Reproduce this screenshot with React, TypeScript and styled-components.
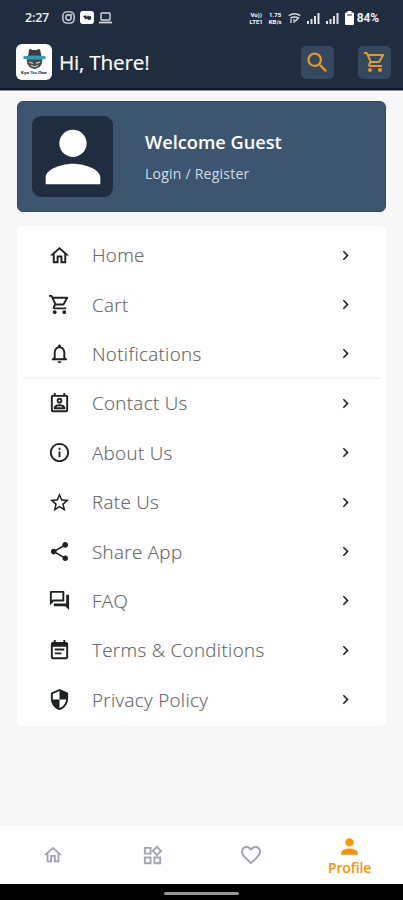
import React from 'react';
import styled, { createGlobalStyle } from 'styled-components';
import {
  MdChevronRight, MdEventNote, MdFavoriteBorder, MdInfoOutline, MdNotificationsNone, MdOutlineHome,
  MdOutlinePermContactCalendar, MdOutlineQuestionAnswer, MdOutlineSecurity, MdOutlineShoppingCart,
  MdOutlineWidgets, MdPerson, MdSearch, MdShare, MdStarBorder,
} from 'react-icons/md';

const GlobalStyle = createGlobalStyle`
  * { box-sizing: border-box; }
  body { margin: 0; background: #f7f7f8; font-family: 'Open Sans', 'Noto Sans', sans-serif; }
  svg { display: block; flex: none; }
`;

const Screen = styled.div`
  width: 403px;
  height: 900px;
  display: flex;
  flex-direction: column;
  overflow: hidden;
  background: #f7f7f8;
`;

const Header = styled.header`
  height: 90px;
  background: #1f2d3e;
  border-bottom: 2px solid #11142d;
  box-shadow: 0 1px 0 #85899a, 0 2px 1px #fff;
`;

const StatusBar = styled.div`
  height: 35px;
  padding: 0 24px 0 25px;
  display: flex;
  align-items: center;
  justify-content: space-between;
  color: #edf1f5;
  font: 700 12px Roboto, sans-serif;
`;

const StatusGroup = styled.div<{ $gap: number }>`
  display: flex;
  align-items: center;
  gap: ${({ $gap }) => $gap}px;
`;

const Clock = styled.span`
  width: 32px;
  font: 600 12.5px 'Open Sans', sans-serif;
  letter-spacing: -0.2px;
`;

const TinyStack = styled.span`
  display: grid;
  justify-items: center;
  font: 800 6px/7px Roboto, sans-serif;
`;

const Percent = styled.span`
  margin-left: -3px;
  letter-spacing: -0.1px;
`;

const TitleBar = styled.div`
  height: 54px;
  padding: 0 12px 0 16px;
  display: flex;
  align-items: center;
`;

const Title = styled.h1`
  flex: 1;
  margin: 0 0 0 7px;
  color: #fff;
  font-size: 20.8px;
  line-height: 28px;
  font-weight: 500;
  letter-spacing: -0.25px;
  -webkit-text-stroke: 0.15px #fff;
`;

const HeaderButton = styled.button`
  width: 33px;
  height: 33px;
  margin-left: 24px;
  padding: 0;
  display: grid;
  place-items: center;
  border: 0;
  border-radius: 5px;
  background: #34495f;
  color: #e9991f;
`;

const Main = styled.main`
  flex: 1;
  padding: 11px 17px 0;
`;

const WelcomeCard = styled.section`
  height: 111px;
  padding: 14px;
  display: flex;
  gap: 32px;
  border: 1px solid #294d68;
  border-radius: 6px;
  background: #3c5670;
`;

const Avatar = styled.div`
  width: 81px;
  height: 81px;
  display: grid;
  place-items: center;
  border-radius: 9px;
  background: #1f2d3e;
`;

const Greeting = styled.div`
  padding-top: 12px;
  color: #fff;
`;

const GreetingTitle = styled.h2`
  margin: 0;
  font-size: 18.2px;
  line-height: 28px;
  font-weight: 600;
`;

const LoginLink = styled.div`
  margin-top: 7px;
  color: #d3dbe5;
  font-size: 14px;
  line-height: 22px;
  letter-spacing: 0.23px;
`;

const Menu = styled.nav`
  height: 500px;
  margin-top: 14px;
  padding: 4.5px 6px 0;
  border-radius: 6px;
  background: #fff;
`;

const MenuRow = styled.div<{ $divided?: boolean }>`
  height: 49.4px;
  padding: 0 25px;
  display: flex;
  align-items: center;
  color: #202124;
  box-shadow: ${({ $divided }) => ($divided ? 'inset 0 -1.5px #f0f0f1' : 'none')};
`;

const MenuLabel = styled.span`
  margin-left: 21px;
  margin-right: auto;
  color: #5c5c5c;
  font-size: 18.8px;
  line-height: 26px;
  font-weight: 300;
  letter-spacing: 0.33px;
  white-space: nowrap;
  -webkit-text-stroke: 0.15px #777;
`;

const Tabs = styled.nav`
  height: 58px;
  padding: 0 4px;
  display: grid;
  grid-template-columns: repeat(4, 1fr);
  background: #fff;
`;

const Tab = styled.div<{ $active?: boolean }>`
  padding-top: ${({ $active }) => ($active ? 1 : 0)}px;
  display: flex;
  flex-direction: column;
  align-items: center;
  justify-content: center;
  color: ${({ $active }) => ($active ? '#fb9209' : '#a0a3b9')};
`;

const TabText = styled.span`
  font-size: 14px;
  line-height: 18px;
  font-weight: 600;
  letter-spacing: -0.1px;
`;

const SystemBar = styled.div`
  height: 16px;
  display: grid;
  place-items: center;
  background: #000;
`;

const Handle = styled.div`
  width: 75px;
  height: 3px;
  margin-top: 2px;
  border-radius: 2px;
  background: #969696;
`;

const Logo = () => (
  <svg width="36" height="36" viewBox="0 0 36 36">
    <rect width="36" height="36" rx="6" fill="#fff" />
    <ellipse cx="18.5" cy="16.5" rx="7.8" ry="8.5" fill="#484a4c" />
    <path d="M12 13 13 6q1-2 3 0h5q2-2 3.2 0l1.3 7z" fill="#3b3d40" />
    <path d="M7.5 12.3q11-1.4 22 0v2.6q-11 1-22 0z" fill="#3498b9" />
    <path d="m13 18 4 1.4M24 18l-4 1.4M15 21.5q3.5 2 7 0" stroke="#c9cdd0" strokeWidth="1.2" fill="none" />
    <g fontFamily="Open Sans, sans-serif" fontSize="4" fontWeight="800">
      <text x="5" y="29.6" fill="#333" textLength="8">Kya</text>
      <text x="14" y="29.6" fill="#1689a0" textLength="7">Tha</text>
      <text x="22" y="29.6" fill="#333" textLength="9">Chor</text>
    </g>
  </svg>
);

const Instagram = () => (
  <svg width="13" height="13" viewBox="0 0 13 13" fill="none" stroke="#d3d9de" strokeWidth="1.4">
    <rect x=".9" y=".9" width="11.2" height="11.2" rx="4" /><circle cx="6.5" cy="6.5" r="2.7" /><circle cx="9.5" cy="3.5" r=".35" />
  </svg>
);

const AppBadge = () => (
  <svg width="14" height="13" viewBox="0 0 14 13">
    <rect width="14" height="13" rx="3" fill="#fff" />
    <path d="m3 5 2.5-.7L7 6l1-2 1 1.5 2-.5v3.5L8.5 9 7 7.4 5.6 8.5z" fill="#1f2d3e" />
  </svg>
);

const Laptop = () => (
  <svg width="13" height="12" viewBox="0 0 13 12" fill="none" stroke="#d3d9de" strokeWidth="1.4">
    <rect x="2" y="1" width="9" height="7" rx=".7" /><path d="M0 10.5h13" strokeWidth="1.8" />
  </svg>
);

const Wifi = () => (
  <svg width="13" height="12" viewBox="0 0 13 12" fill="none" stroke="#d3d9de" strokeWidth="1.5">
    <path d="M.7 3.7Q6.5 0 12.3 3.7M2.5 6Q6.5 3.8 10.5 6L7 9.5" /><path d="M3 7v4m3-4v4" strokeWidth="1.3" />
  </svg>
);

const Signal = () => (
  <svg width="13" height="12" viewBox="0 0 13 12" fill="#dce1e6">
    <rect y="9" width="2" height="3" />
    <rect x="3.5" y="7" width="2" height="5" />
    <rect x="7" y="4" width="2" height="8" />
    <rect x="10.5" y="1" width="2" height="11" />
  </svg>
);

const Battery = () => (
  <svg width="9" height="14" viewBox="0 0 9 14" fill="#fff">
    <rect x="2.5" width="4" height="3" /><rect y="1.5" width="9" height="12.5" rx="1.2" /><path d="M2 3.5h5v1H2z" fill="#1f2d3e" />
  </svg>
);

const rows = [
  { label: 'Home', Icon: MdOutlineHome },
  { label: 'Cart', Icon: MdOutlineShoppingCart },
  { label: 'Notifications', Icon: MdNotificationsNone, divided: true },
  { label: 'Contact Us', Icon: MdOutlinePermContactCalendar },
  { label: 'About Us', Icon: MdInfoOutline },
  { label: 'Rate Us', Icon: MdStarBorder },
  { label: 'Share App', Icon: MdShare },
  { label: 'FAQ', Icon: MdOutlineQuestionAnswer },
  { label: 'Terms & Conditions', Icon: MdEventNote },
  { label: 'Privacy Policy', Icon: MdOutlineSecurity },
];

export default function App() {
  return (
    <Screen>
      <GlobalStyle />
      <Header>
        <StatusBar>
          <StatusGroup $gap={5}><Clock>2:27</Clock><Instagram /><AppBadge /><Laptop /></StatusGroup>
          <StatusGroup $gap={6}>
            <TinyStack><span>Vo))</span><span>LTE1</span></TinyStack>
            <TinyStack><span>1.75</span><span>KB/s</span></TinyStack>
            <Wifi /><Signal /><Signal /><Battery /><Percent>84%</Percent>
          </StatusGroup>
        </StatusBar>
        <TitleBar>
          <Logo />
          <Title>Hi, There!</Title>
          <HeaderButton aria-label="Search"><MdSearch size={27} /></HeaderButton>
          <HeaderButton aria-label="Cart"><MdOutlineShoppingCart size={24} /></HeaderButton>
        </TitleBar>
      </Header>
      <Main>
        <WelcomeCard>
          <Avatar><MdPerson size={82} color="#fff" /></Avatar>
          <Greeting>
            <GreetingTitle>Welcome Guest</GreetingTitle>
            <LoginLink>Login / Register</LoginLink>
          </Greeting>
        </WelcomeCard>
        <Menu>
          {rows.map(({ label, Icon, divided }) => (
            <MenuRow key={label} $divided={divided}>
              <Icon size={23} />
              <MenuLabel>{label}</MenuLabel>
              <MdChevronRight size={19} />
            </MenuRow>
          ))}
        </Menu>
      </Main>
      <Tabs>
        <Tab><MdOutlineHome size={22} /></Tab>
        <Tab><MdOutlineWidgets size={23} /></Tab>
        <Tab><MdFavoriteBorder size={24} /></Tab>
        <Tab $active><MdPerson size={25} /><TabText>Profile</TabText></Tab>
      </Tabs>
      <SystemBar><Handle /></SystemBar>
    </Screen>
  );
}
